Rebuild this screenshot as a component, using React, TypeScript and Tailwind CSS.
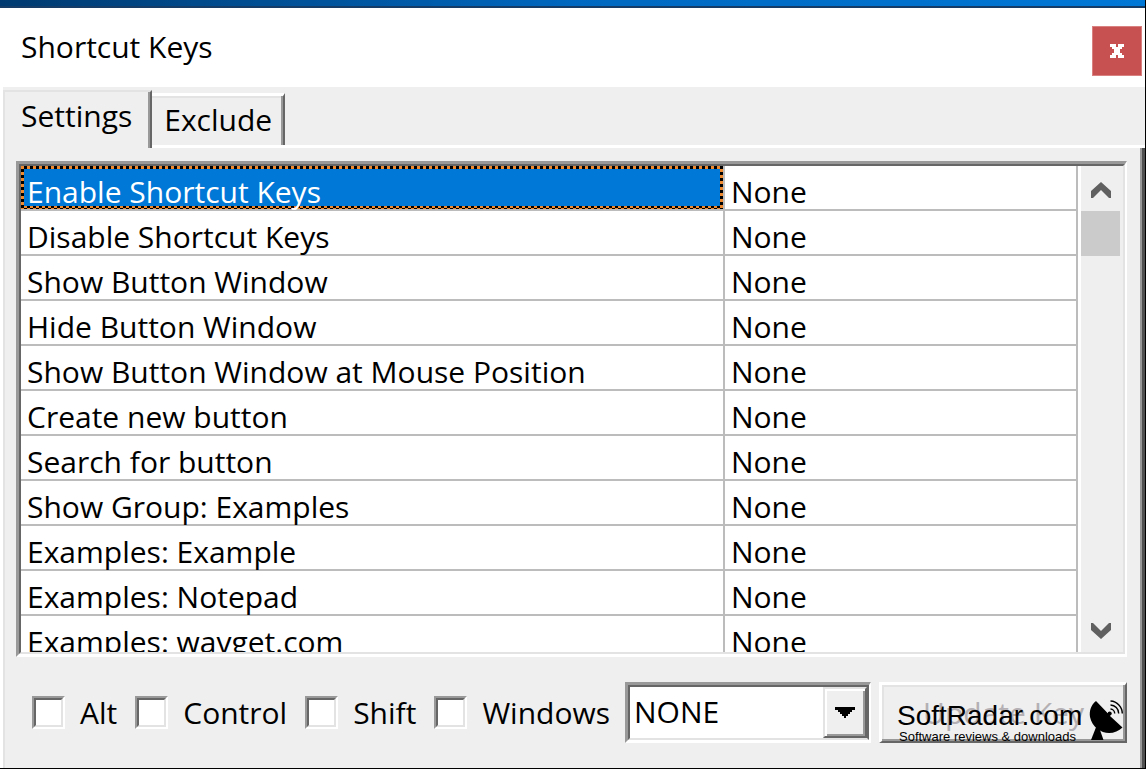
import React from "react";

const shortcuts = [
  "Enable Shortcut Keys",
  "Disable Shortcut Keys",
  "Show Button Window",
  "Hide Button Window",
  "Show Button Window at Mouse Position",
  "Create new button",
  "Search for button",
  "Show Group: Examples",
  "Examples: Example",
  "Examples: Notepad",
  "Examples: wavget.com",
];

const modifiers = ["Alt", "Control", "Shift", "Windows"];

const sunken =
  "border-t-[3px] border-l-[3px] border-t-[#999] border-l-[#999] border-r-2 border-b-[3px] border-r-white border-b-white";

function TitleBar() {
  return (
    <header className="flex h-[79px] shrink-0 items-center justify-between bg-white pl-[21px] pr-[3px]">
      <h1 className="pb-[2px]">Shortcut Keys</h1>
      <button
        aria-label="Close"
        className="mt-[7px] flex size-[50px] items-center justify-center border border-[#d98080] bg-[#c75050]"
      >
        <svg viewBox="0 0 14 14" className="size-[14px]" fill="#fff" shapeRendering="crispEdges">
          <path d="M0 0H6V3H8V0H14V3H12V5H10V9H12V11H14V14H8V11H6V14H0V11H2V9H4V5H2V3H0Z" />
        </svg>
      </button>
    </header>
  );
}

function Tabs() {
  return (
    <div role="tablist" className="flex h-[61px] shrink-0 items-end border-l-[3px] border-white">
      <button
        role="tab"
        aria-selected="true"
        className="flex h-[58px] items-start border-t-2 border-l-2 border-r-2 border-t-[#e3e3e3] border-l-[#e3e3e3] border-r-[#666] pl-[16px] pr-[18px] pt-[6px] shadow-[inset_-2px_0_#999]"
      >
        Settings
      </button>
      <div className="flex flex-1 items-end self-stretch border-b-[3px] border-white">
        <button
          role="tab"
          aria-selected="false"
          className="flex h-[52px] items-start border-t-[3px] border-r-2 border-t-white border-r-[#666] pl-[12px] pr-[11px] pt-[6px] shadow-[inset_-2px_0_#999,inset_0_2px_#e3e3e3]"
        >
          Exclude
        </button>
      </div>
    </div>
  );
}

function ShortcutTable() {
  return (
    <table className="w-full table-fixed border-separate border-spacing-0">
      <colgroup>
        <col className="w-[66.6%]" />
        <col />
      </colgroup>
      <tbody>
        {shortcuts.map((name, i) => (
          <tr key={name}>
            <td className="border-b-2 border-r-2 border-[#bcbcbc] p-0">
              {i === 0 ? (
                <div className="h-[43px] bg-[repeating-conic-gradient(#000_0_25%,#f08a30_0_50%)] bg-[length:6px_6px] p-[3px]">
                  <div className="flex h-full items-center bg-[#0078d7] pl-[3px] pt-[8px] text-white">{name}</div>
                </div>
              ) : (
                <div className="flex h-[43px] items-center pl-[6px] pt-[8px]">{name}</div>
              )}
            </td>
            <td className="border-b-2 border-r-2 border-[#bcbcbc] p-0">
              <div className="flex h-[43px] items-center pl-[6px] pt-[8px]">None</div>
            </td>
          </tr>
        ))}
      </tbody>
    </table>
  );
}

function ScrollBar() {
  return (
    <div className="flex w-[39px] shrink-0 flex-col bg-[#efefef]">
      <button aria-label="Scroll up" className="flex h-[45px] items-center justify-center">
        <svg viewBox="0 0 20 16" className="mt-[3px] h-[16px] w-[20px]" fill="#606060">
          <path d="M10 0L20 9V16H18L10 8L2 16H0V9Z" />
        </svg>
      </button>
      <div className="h-[45px] bg-[#cbcbcb]" />
      <div className="flex-1" />
      <button aria-label="Scroll down" className="flex h-[45px] items-center justify-center">
        <svg viewBox="0 0 20 16" className="mt-[3px] h-[16px] w-[20px]" fill="#606060">
          <path d="M10 16L20 7V0H18L10 8L2 0H0V7Z" />
        </svg>
      </button>
    </div>
  );
}

function DishLogo() {
  return (
    <svg viewBox="0 0 34 41" className="h-[41px] w-[34px] shrink-0">
      <path d="M7 1C2 5 0 11 1 17C3 27 12 33 20 33C25 33 30 31 33.500 27.500L21 16L19 13.500Z" fill="#000" />
      <path d="M7.500 26L2 40H14.500L11 30Z" fill="#000" />
      <path d="M17 17L21 13.500" stroke="#000" strokeWidth="3" />
      <circle cx="20.700" cy="13.500" r="2" fill="#000" />
      <g fill="none" stroke="#000" strokeWidth="1.400">
        <path d="M21.500 9A4.500 4.500 0 0 1 25.700 13.500" />
        <path d="M21.500 5A8.500 8.500 0 0 1 29.700 13.500" />
        <path d="M21.500 1A12.500 12.500 0 0 1 33.300 13.500" />
      </g>
    </svg>
  );
}

function Footer() {
  return (
    <div className="flex h-[111px] shrink-0 items-center pl-[16px]">
      <div className="flex gap-[18px]">
        {modifiers.map((m) => (
          <label key={m} className="flex items-center gap-[15px]">
            <span className="flex border-2 border-t-[#999] border-l-[#999] border-b-white border-r-white">
              <input
                type="checkbox"
                className="size-[29px] appearance-none border-2 border-t-[#666] border-l-[#666] border-b-[#e3e3e3] border-r-[#e3e3e3] bg-white"
              />
            </span>
            {m}
          </label>
        ))}
      </div>
      <div className={`relative ml-[15px] h-[61px] w-[246px] ${sunken}`}>
        <select
          aria-label="Key"
          className="h-full w-full appearance-none border-2 border-t-[#666] border-l-[#666] border-b-[#e3e3e3] border-r-[#666] bg-white pl-[4px] pb-[2px] text-black"
        >
          <option>NONE</option>
        </select>
        <span className="pointer-events-none absolute right-[2px] top-[2px] flex h-[51px] w-[44px] items-center justify-center border-2 border-[#e3e3e3] border-r-[#666] border-b-[#666] bg-[#efefef] shadow-[inset_2px_2px_#fff,inset_-2px_-2px_#999]">
          <svg viewBox="0 0 20 11" className="h-[11px] w-[20px]" shapeRendering="crispEdges">
            <path d="M0 0H20V3H17V5H15V7H13V9H11V11H9V9H7V7H5V5H3V3H0Z" fill="#000" />
          </svg>
        </span>
      </div>
      <div className="relative ml-[8px] mr-[13px] flex-1">
        <button
          disabled
          className="block h-[61px] w-full border-t-[3px] border-l-[3px] border-r-2 border-b-2 border-t-white border-l-white border-r-[#666] border-b-[#666] text-[#b4b0b4] shadow-[inset_-2px_-2px_#999,inset_2px_2px_#e3e3e3]"
        >
          Update Key
        </button>
        <div className="absolute right-[4px] top-[18px] flex w-[226px] justify-between font-['Liberation_Sans',sans-serif] text-black">
          <div className="whitespace-nowrap">
            <p className="text-[28px] leading-[32px]">SoftRadar.com</p>
            <p className="pl-[2px] text-[13px] leading-[9px]">Software reviews &amp; downloads</p>
          </div>
          <DishLogo />
        </div>
      </div>
    </div>
  );
}

export default function App() {
  return (
    <div className="flex h-screen flex-col overflow-hidden border-b border-r border-black bg-[#efefef] font-['Open_Sans',sans-serif] text-[30px] leading-[36px] text-black">
      <div className="h-[8px] shrink-0 border-b-2 border-[#143c66] bg-linear-to-r from-[#003a70] via-[#0068c0] to-[#0078d7]" />
      <TitleBar />
      <Tabs />
      <main className="flex min-h-0 flex-1 flex-col border-l-[3px] border-r-[3px] border-l-white border-r-[#505050] pt-[13px] shadow-[inset_-2px_0_#999,inset_2px_0_#e3e3e3]">
        <div className="ml-[13px] mr-[15px] flex min-h-0 flex-1 flex-col">
          <div className={`flex min-h-0 flex-1 ${sunken}`}>
            <div className="flex min-w-0 flex-1 overflow-hidden border-2 border-t-[#666] border-l-[#666] border-r-[#e3e3e3] border-b-[#e3e3e3] bg-white">
              <div className="mr-[3px] min-w-0 flex-1 overflow-hidden">
                <ShortcutTable />
              </div>
              <ScrollBar />
              <div className="w-[3px] bg-[#efefef]" />
            </div>
          </div>
        </div>
        <div className="pl-[13px] pr-[2px]">
          <Footer />
        </div>
      </main>
    </div>
  );
}
